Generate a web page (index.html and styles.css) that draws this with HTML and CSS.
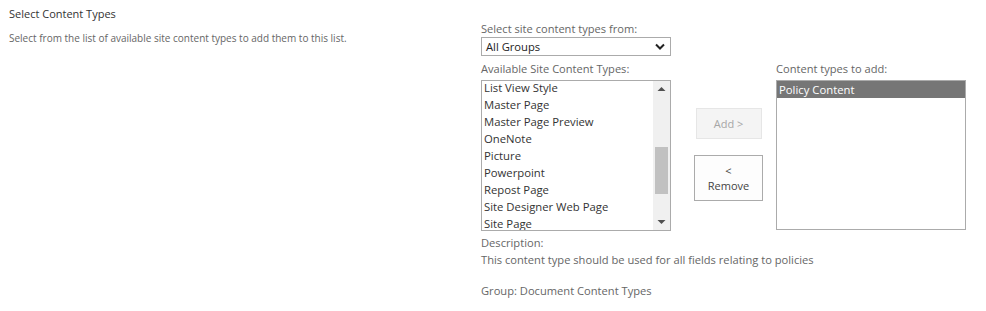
FILE: index.html
```html
<!DOCTYPE html>
<html lang="en">
<head>
<meta charset="utf-8">
<title>Select Content Types</title>
<link rel="stylesheet" href="styles.css">
</head>
<body>
<div class="page">
  <div class="left">
    <div class="title">Select Content Types</div>
    <div class="help">Select from the list of available site content types to add them to this list.</div>
  </div>
  <div class="right">
    <div class="label">Select site content types from:</div>
    <div class="select">
      <span>All Groups</span>
      <svg class="chev" width="10" height="7" viewBox="0 0 10 7"><path d="M1 1.5 L5 5.5 L9 1.5" fill="none" stroke="#222" stroke-width="2"/></svg>
    </div>
    <div class="lists">
      <div class="col">
        <div class="label">Available Site Content Types:</div>
        <div class="listbox">
          <div class="items scrolled">
            <div class="item">List View Style</div>
            <div class="item">Master Page</div>
            <div class="item">Master Page Preview</div>
            <div class="item">OneNote</div>
            <div class="item">Picture</div>
            <div class="item">Powerpoint</div>
            <div class="item">Repost Page</div>
            <div class="item">Site Designer Web Page</div>
            <div class="item">Site Page</div>
          </div>
          <div class="scrollbar">
            <svg class="arrow" width="17" height="17" viewBox="0 0 17 17"><path d="M4.5 10 L8.5 6 L12.5 10 Z" fill="#505050"/></svg>
            <div class="track"><div class="thumb"></div></div>
            <svg class="arrow" width="17" height="17" viewBox="0 0 17 17"><path d="M4.5 7 L8.5 11 L12.5 7 Z" fill="#505050"/></svg>
          </div>
        </div>
        <div class="desc">
          <div>Description:</div>
          <div>This content type should be used for all fields relating to policies</div>
          <div class="group">Group: Document Content Types</div>
        </div>
      </div>
      <div class="buttons">
        <div class="btn disabled">Add &gt;</div>
        <div class="btn remove">&lt;<br>Remove</div>
      </div>
      <div class="col">
        <div class="label">Content types to add:</div>
        <div class="listbox target">
          <div class="items">
            <div class="item selected">Policy Content</div>
          </div>
        </div>
      </div>
    </div>
  </div>
</div>
</body>
</html>
```
FILE: styles.css
```css
html, body {
  margin: 0;
  padding: 0;
  background: #fff;
}
body {
  font-family: "Open Sans", "Noto Sans", sans-serif;
  color: #444;
}
.page {
  display: flex;
  align-items: flex-start;
}
.left {
  flex: none;
  width: 472px;
  padding-left: 9px;
  padding-top: 6px;
}
.title {
  font-size: 11px;
  line-height: 16px;
  color: #333;
}
.help {
  margin-top: 9px;
  font-size: 10px;
  line-height: 14px;
  color: #666;
}
.right {
  flex: none;
  padding-top: 21px;
}
.label {
  font-size: 11.1px;
  line-height: 16px;
  color: #666;
  white-space: nowrap;
}
.select {
  box-sizing: border-box;
  width: 190px;
  height: 19px;
  border: 1px solid #ababab;
  display: flex;
  align-items: center;
  justify-content: space-between;
  padding: 0 5px 0 4px;
  font-size: 11.2px;
  color: #222;
}
.lists {
  display: flex;
  align-items: flex-start;
  margin-top: 5px;
}
.col {
  flex: none;
  width: 190px;
}
.col .label {
  height: 16px;
  margin-bottom: 3px;
}
.listbox {
  box-sizing: border-box;
  width: 190px;
  height: 151px;
  border: 1px solid #ababab;
  display: flex;
  overflow: hidden;
}
.items {
  flex: 1;
}
.items.scrolled {
  margin-top: -2px;
}
.item {
  height: 17px;
  line-height: 17px;
  font-size: 11.3px;
  color: #333;
  padding-left: 2px;
  white-space: nowrap;
}
.item.selected {
  background: #767676;
  color: #fff;
}
.scrollbar {
  width: 17px;
  background: #f0f0f0;
  display: flex;
  flex-direction: column;
}
.arrow {
  display: block;
  flex: none;
}
.track {
  flex: 1;
}
.thumb {
  margin: 49px 2px 0 2px;
  height: 47px;
  background: #c1c1c1;
}
.target {
  height: 150px;
}
.buttons {
  flex: none;
  box-sizing: border-box;
  width: 105px;
  display: flex;
  flex-direction: column;
  align-items: center;
  padding-top: 47px;
  padding-left: 10px;
  gap: 16px;
}
.btn {
  box-sizing: border-box;
  display: flex;
  align-items: center;
  justify-content: center;
  text-align: center;
  font-size: 11px;
  line-height: 15px;
}
.btn.disabled {
  width: 66px;
  height: 31px;
  background: #f4f4f4;
  border: 1px solid #e6e6e6;
  color: #a6a6a6;
}
.btn.remove {
  width: 69px;
  height: 46px;
  background: #fdfdfd;
  border: 1px solid #ababab;
  color: #444;
}
.desc {
  margin-top: 3px;
  font-size: 11.15px;
  line-height: 17px;
  color: #666;
  white-space: nowrap;
}
.desc .group {
  margin-top: 14px;
}
```
